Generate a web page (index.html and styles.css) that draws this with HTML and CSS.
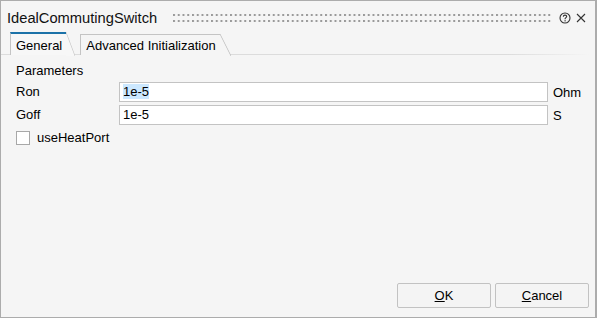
FILE: index.html
```html
<!DOCTYPE html>
<html>
<head>
<meta charset="utf-8">
<link rel="stylesheet" href="styles.css">
</head>
<body>
<div class="window">
  <div class="titlebar">
    <span class="title">IdealCommutingSwitch</span>
    <svg class="grip" height="8">
      <defs>
        <pattern id="dots" width="4.75" height="6" patternUnits="userSpaceOnUse">
          <rect x="0" y="0" width="2" height="2" fill="#9a9a9a"/>
        </pattern>
      </defs>
      <rect width="100%" height="8" fill="url(#dots)"/>
    </svg>
    <svg class="help" width="12" height="12" viewBox="0 0 12 12">
      <circle cx="6" cy="6" r="5" fill="none" stroke="#333" stroke-width="1.1"/>
      <path d="M4.3 4.7 C4.3 3.6 5 3.1 6 3.1 C7 3.1 7.7 3.7 7.7 4.5 C7.7 5.5 6.3 5.6 6.1 6.6 L6.1 7.2" fill="none" stroke="#333" stroke-width="1.1"/>
      <rect x="5.5" y="8.2" width="1.2" height="1.2" fill="#333"/>
    </svg>
    <svg class="close" width="10" height="10" viewBox="0 0 10 10">
      <path d="M1 1 L9 9 M9 1 L1 9" stroke="#333" stroke-width="1.1" fill="none"/>
    </svg>
  </div>
  <div class="tabbar">
    <div class="tab active">General</div>
    <div class="tab">Advanced Initialization</div>
  </div>
  <div class="content">
    <div class="section">Parameters</div>
    <div class="grid">
      <label class="lbl">Ron</label>
      <div class="field"><span class="sel">1e-5</span></div>
      <span class="unit">Ohm</span>
      <label class="lbl">Goff</label>
      <div class="field">1e-5</div>
      <span class="unit">S</span>
    </div>
    <div class="check"><span class="box"></span><span>useHeatPort</span></div>
  </div>
  <div class="buttons">
    <button class="btn"><u>O</u>K</button>
    <button class="btn"><u>C</u>ancel</button>
  </div>
</div>
</body>
</html>
```
FILE: styles.css
```css
html, body { margin: 0; padding: 0; }
body { font-family: "Liberation Sans", Arial, sans-serif; font-size: 13px; color: #000; }
.window {
  width: 597px; height: 318px; box-sizing: border-box;
  border: 1px solid #acacac; border-right-width: 2px; background: #f5f5f5;
  display: flex; flex-direction: column;
}
.titlebar { height: 30px; display: flex; align-items: center; padding-left: 6px; padding-right: 6px; }
.title { font-size: 14.7px; color: #111; margin-top: 4px; }
.grip { flex: 1; height: 8px; margin: 4px 6px 0 16px; }
.help { margin-top: 3px; margin-right: 5px; }
.close { margin-top: 3px; margin-right: 3px; }
.tabbar {
  height: 23px; display: flex; align-items: flex-end; padding-left: 9px;
  border-bottom: 1px solid transparent;
  border-image: linear-gradient(to right, #dcdcdc 85%, #f5f5f5 99%) 1;
}
.tab {
  position: relative; height: 21px; box-sizing: border-box;
  border-left: 1px solid #c4c4c4; border-top: 1px solid #c4c4c4;
  padding: 2px 4px 0 5px; margin-right: 13px; line-height: 18px;
  background: #f5f5f5; margin-bottom: -1px;
}
.tab::after {
  content: ""; position: absolute; top: -1px; right: -11px; width: 11px; height: 22px;
  background: linear-gradient(to top right, #f5f5f5 calc(50% - 0.8px), #c4c4c4 50%, transparent calc(50% + 0.8px));
}
.tab.active {
  height: 23px; border-top: 2px solid #1c72a8; padding-top: 3px; margin-right: 14px;
  background: #f7f7f7; z-index: 1;
}
.tab.active::after { top: -2px; height: 24px; right: -9px; width: 9px;
  background: linear-gradient(to top right, #f7f7f7 calc(50% - 0.8px), #d0d0d0 50%, transparent calc(50% + 0.8px)); }
.content { padding: 8px 3px 0 15px; flex: 1; }
.section { line-height: 15px; }
.grid { display: grid; grid-template-columns: 103px 429px auto; row-gap: 3px; margin-top: 4px; align-items: center; }
.lbl { line-height: 16px; }
.field {
  height: 20px; box-sizing: border-box; border: 1px solid #c3c3c3; background: #fff;
  padding: 0 3px; line-height: 18px;
}
.sel { background: #cce8ff; }
.unit { padding-left: 5px; }
.check { display: flex; align-items: center; margin-top: 5px; }
.box { width: 12px; height: 12px; border: 1px solid #a8a8a8; background: #fff; margin-right: 7px; box-sizing: content-box; }
.buttons { display: flex; justify-content: flex-end; gap: 4px; padding: 0 6px 9px 0; }
.btn {
  width: 94px; height: 25px; font-family: inherit; font-size: 13px;
  background: #f4f4f4; border: 1px solid #c2c2c2; border-radius: 2px; color: #000; padding: 0;
}
```
